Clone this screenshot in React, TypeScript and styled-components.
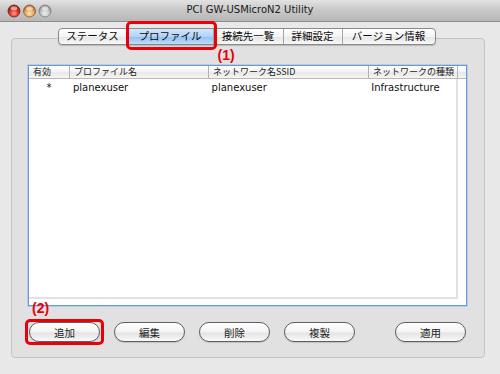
import React from 'react'
import styled, { createGlobalStyle } from 'styled-components'

const GlobalStyle = createGlobalStyle`
  html, body {
    margin: 0;
    padding: 0;
  }
  body {
    width: 500px;
    height: 374px;
    overflow: hidden;
    background: #e8e8e8;
    font-family: "DejaVu Sans", "Noto Sans CJK JP", sans-serif;
  }
`

const Window = styled.div`
  width: 500px;
  height: 374px;
  display: flex;
  flex-direction: column;
  background: #e8e8e8;
`

const TitleBar = styled.div`
  height: 21px;
  border-bottom: 1px solid #8e8e8e;
  background: linear-gradient(#e2e2e2, #c9c9c9 45%, #b7b7b7);
  display: flex;
  align-items: center;
  position: relative;
`

const Lights = styled.svg`
  margin-left: 7px;
  flex: none;
`

const Title = styled.div`
  position: absolute;
  left: 0;
  right: 0;
  text-align: center;
  font-size: 10px;
  color: #1a1a1a;
  top: 4px;
`

const Content = styled.div`
  padding: 16px 15px 0 11px;
`

const Group = styled.div`
  height: 318px;
  border: 1px solid #c3c3c3;
  border-radius: 4px;
  background: #e1e1e1;
  padding: 0 17px 0 16px;
  display: flex;
  flex-direction: column;
`

const TabRow = styled.div`
  display: flex;
  justify-content: center;
  margin-top: -11px;
  padding-right: 2px;
`

const TabBar = styled.div`
  display: flex;
  height: 15px;
  border: 1px solid #8a8a8a;
  border-radius: 4px;
  box-shadow: 0 1px 1px rgba(0, 0, 0, 0.18);
  background: linear-gradient(#ffffff, #f4f4f4 50%, #e6e6e6 55%, #f7f7f7);
`

const Tab = styled.div<{ $w: number; $active?: boolean }>`
  position: relative;
  width: ${p => p.$w}px;
  box-sizing: border-box;
  display: flex;
  align-items: center;
  justify-content: center;
  font-family: "Noto Sans CJK JP", sans-serif;
  font-size: 10.5px;
  color: #0a0a0a;
  line-height: 1;
  & + & {
    border-left: 1px solid #a6a6a6;
  }
  ${p =>
    p.$active &&
    `background: linear-gradient(#d3e7fb, #b1d3f7 50%, #95c1f1 55%, #bcdcfb);`}
`

const RedFrame = styled.div<{ $t: number; $r: number; $b: number; $l: number }>`
  position: absolute;
  top: ${p => p.$t}px;
  right: ${p => p.$r}px;
  bottom: ${p => p.$b}px;
  left: ${p => p.$l}px;
  border: 3px solid #e8000b;
  border-radius: 5px;
  pointer-events: none;
`

const Note = styled.div<{ $x: number; $y: number }>`
  position: absolute;
  left: ${p => p.$x}px;
  top: ${p => p.$y}px;
  font-family: "Liberation Sans", Arial, sans-serif;
  font-weight: bold;
  font-size: 14px;
  line-height: 14px;
  color: #e8000b;
  white-space: nowrap;
`

const Table = styled.div`
  margin-top: 20px;
  height: 239px;
  border: 1px solid #6e98cf;
  box-shadow: 0 0 0 1px #b3cdee;
  background: #fff;
  display: flex;
  flex-direction: column;
`

const HeaderRow = styled.div`
  display: flex;
  height: 12px;
  border-bottom: 1px solid #b9b9b9;
  background: linear-gradient(#ffffff, #f2f2f2 50%, #e9e9e9 55%, #f5f5f5);
`

const HeaderCell = styled.div<{ $w: number }>`
  width: ${p => p.$w}px;
  box-sizing: border-box;
  padding-left: 4px;
  font-family: "Noto Sans CJK JP", sans-serif;
  font-size: 9px;
  line-height: 12px;
  color: #222;
  white-space: nowrap;
  overflow: hidden;
  & + & {
    border-left: 1px solid #b3b3b3;
  }
`

const Body = styled.div`
  flex: 1;
  margin: 0 8px 6px 0;
  border-right: 2px solid #e2e2e2;
  border-bottom: 2px solid #e2e2e2;
`

const Row = styled.div`
  display: flex;
  height: 17px;
  align-items: center;
`

const Cell = styled.div<{ $w: number; $center?: boolean }>`
  width: ${p => p.$w}px;
  box-sizing: border-box;
  padding-left: ${p => (p.$center ? 0 : 4)}px;
  text-align: ${p => (p.$center ? 'center' : 'left')};
  font-size: 10px;
  color: #111;
  white-space: nowrap;
`

const ButtonRow = styled.div`
  margin-top: 16px;
  display: flex;
  gap: 14px;
  padding: 0 1px;
`

const Button = styled.div<{ $push?: boolean }>`
  position: relative;
  width: 69px;
  height: 18px;
  box-sizing: content-box;
  border: 1px solid #5f5f5f;
  border-radius: 10px;
  background: linear-gradient(#ffffff, #f3f3f3 50%, #e3e3e3 55%, #f9f9f9);
  box-shadow: 0 1px 1px rgba(0, 0, 0, 0.15);
  display: flex;
  align-items: center;
  justify-content: center;
  font-family: "Noto Sans CJK JP", sans-serif;
  font-size: 10.5px;
  color: #222;
  margin-left: ${p => (p.$push ? 'auto' : '0')};
`

const tabs = [
  { label: 'ステータス', w: 68 },
  { label: 'プロファイル', w: 86, active: true },
  { label: '接続先一覧', w: 70 },
  { label: '詳細設定', w: 59 },
  { label: 'バージョン情報', w: 93 },
]

const cols = [
  { label: '有効', w: 40 },
  { label: 'プロファイル名', w: 139 },
  { label: 'ネットワーク名SSID', w: 160 },
  { label: 'ネットワークの種類', w: 89 },
  { label: '', w: 9 },
]

function TrafficLights() {
  return (
    <Lights width="48" height="14" viewBox="0 0 48 14">
      <defs>
        <radialGradient id="red" cx="50%" cy="70%" r="60%">
          <stop offset="0" stopColor="#ff9c8a" />
          <stop offset="0.6" stopColor="#d8322a" />
          <stop offset="1" stopColor="#8e1410" />
        </radialGradient>
        <radialGradient id="orange" cx="50%" cy="70%" r="60%">
          <stop offset="0" stopColor="#ffe2b8" />
          <stop offset="0.6" stopColor="#e9a664" />
          <stop offset="1" stopColor="#a8622a" />
        </radialGradient>
        <radialGradient id="grey" cx="50%" cy="70%" r="60%">
          <stop offset="0" stopColor="#f0f0f0" />
          <stop offset="0.6" stopColor="#c4c4c4" />
          <stop offset="1" stopColor="#8c8c8c" />
        </radialGradient>
      </defs>
      {[
        { x: 7, f: 'url(#red)', s: '#7a1a16' },
        { x: 22.5, f: 'url(#orange)', s: '#8a5a2e' },
        { x: 38, f: 'url(#grey)', s: '#7d7d7d' },
      ].map(c => (
        <g key={c.x}>
          <circle cx={c.x} cy="7" r="6" fill={c.f} stroke={c.s} strokeWidth="0.8" />
          <ellipse cx={c.x} cy="4.2" rx="3.4" ry="2" fill="#fff" opacity="0.55" />
        </g>
      ))}
    </Lights>
  )
}

export default function App() {
  return (
    <>
      <GlobalStyle />
      <Window>
        <TitleBar>
          <TrafficLights />
          <Title>PCI GW-USMicroN2 Utility</Title>
        </TitleBar>
        <Content>
          <Group>
            <TabRow>
              <TabBar>
                {tabs.map(t => (
                  <Tab key={t.label} $w={t.w} $active={t.active}>
                    {t.label}
                    {t.active && (
                      <>
                        <RedFrame $t={-8} $r={-4} $b={-6} $l={-2} />
                        <Note $x={90} $y={19}>(1)</Note>
                      </>
                    )}
                  </Tab>
                ))}
              </TabBar>
            </TabRow>
            <Table>
              <HeaderRow>
                {cols.map((c, i) => (
                  <HeaderCell key={i} $w={c.w}>
                    {c.label}
                  </HeaderCell>
                ))}
              </HeaderRow>
              <Body>
                <Row>
                  <Cell $w={40} $center>
                    *
                  </Cell>
                  <Cell $w={139}>planexuser</Cell>
                  <Cell $w={160}>planexuser</Cell>
                  <Cell $w={89}>Infrastructure</Cell>
                </Row>
              </Body>
            </Table>
            <ButtonRow>
              <Button>
                追加
                <RedFrame $t={-4} $r={-5} $b={-4} $l={-5} />
                <Note $x={2} $y={-22}>(2)</Note>
              </Button>
              <Button>編集</Button>
              <Button>削除</Button>
              <Button>複製</Button>
              <Button $push>適用</Button>
            </ButtonRow>
          </Group>
        </Content>
      </Window>
    </>
  )
}
